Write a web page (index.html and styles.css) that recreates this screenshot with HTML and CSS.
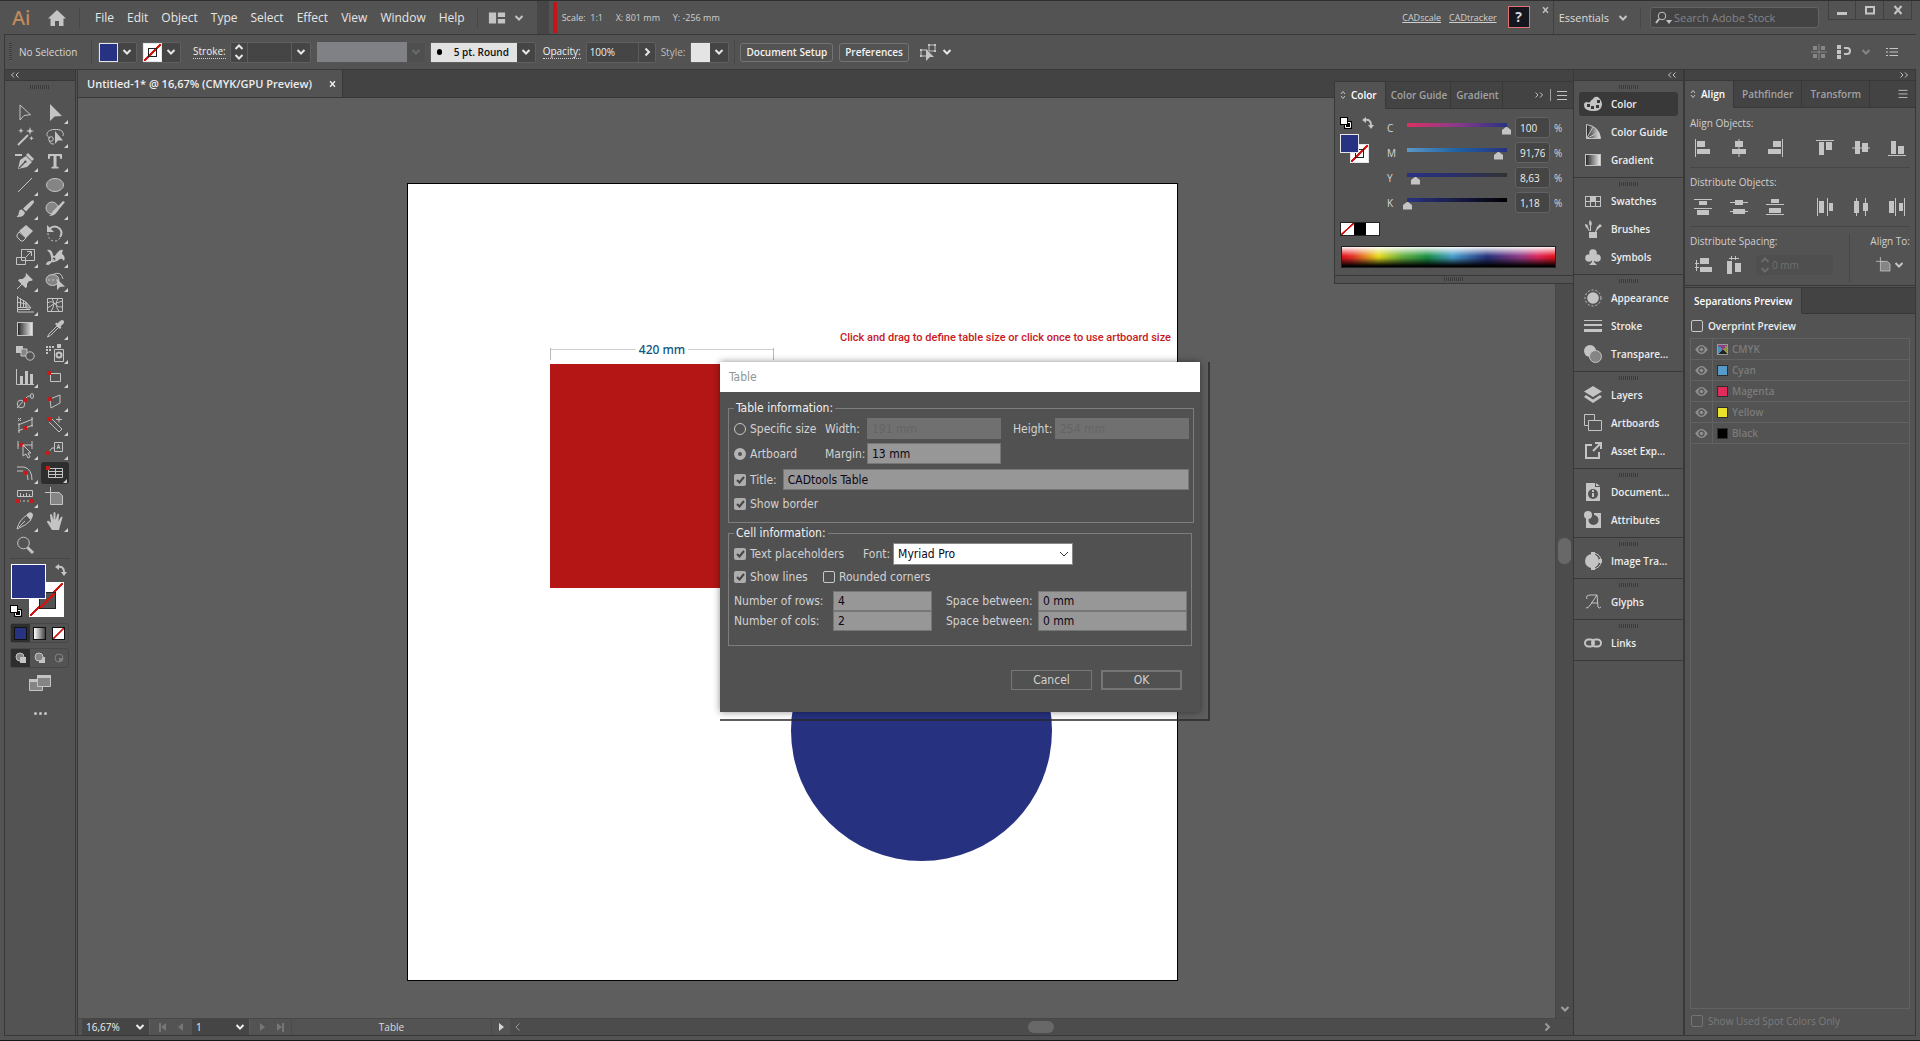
FILE: index.html
```html
<!DOCTYPE html>
<html lang="en">
  <head>
    <meta charset="utf-8">
    <meta name="viewport" content="width=device-width, initial-scale=1">
    <title>Untitled-1* @ 16,67% (CMYK/GPU Preview)</title>
    <link rel="stylesheet" href="styles.css">
  </head>
  <body>

    <!-- icon sprite -->
    <svg class="sprite" aria-hidden="true">
      <defs>
        <linearGradient id="gradGrey"><stop offset="0" stop-color="#222"/><stop offset="1" stop-color="#eee"/></linearGradient>
      </defs>
      <symbol id="i-home" viewBox="0 0 20 20"><path class="f" d="M10 2 1 10.5h2.5V18H8v-5h4v5h4.500v-7.500H19z"/></symbol>
      <symbol id="i-layout" viewBox="0 0 20 16"><path class="f" d="M1 2h8v12H1zM11 2h8v5h-8zM11 9h8v5h-8z"/></symbol>
      <symbol id="i-chev" viewBox="0 0 10 10"><path class="s2" d="M1.500 3 5 6.500 8.500 3"/></symbol>
      <symbol id="i-chevr" viewBox="0 0 10 10"><path class="s2" d="M3.500 1.500 7 5 3.500 8.500"/></symbol>
      <symbol id="i-chevl" viewBox="0 0 10 10"><path class="s" d="M6.500 1.500 3 5l3.500 3.500"/></symbol>
      <symbol id="i-updown" viewBox="0 0 10 18"><path class="s2" d="M1.500 6 5 2.500 8.500 6M1.500 12 5 15.500 8.500 12"/></symbol>
      <symbol id="i-sort" viewBox="0 0 6 10"><path class="s" d="M1 4l2-2.500L5 4M1 6l2 2.500L5 6"/></symbol>
      <symbol id="i-coll" viewBox="0 0 10 8"><path class="s" d="M4 1.500 1.500 4 4 6.500M8.500 1.500 6 4l2.500 2.500"/></symbol>
      <symbol id="i-exp" viewBox="0 0 10 8"><path class="s" d="M1.500 1.500 4 4 1.500 6.500M6 1.500 8.500 4 6 6.500"/></symbol>
      <symbol id="i-menu" viewBox="0 0 10 10"><path class="s" d="M0 1.500h10M0 5.500h10M0 9.500h10"/></symbol>
      <symbol id="i-search" viewBox="0 0 18 14"><circle class="s" cx="7" cy="5" r="3.800"/><path class="s2" d="M4 8 1 12"/><path class="f" d="M11 9h6l-3 4z"/></symbol>
      <symbol id="i-close" viewBox="0 0 10 10"><path class="s2" d="M1.500 1 8.500 9M8.500 1 1.500 9"/></symbol>
      <symbol id="i-min" viewBox="0 0 10 10"><path class="f" d="M0 7h10v3H0z"/></symbol>
      <symbol id="i-max" viewBox="0 0 10 10"><path class="s2" d="M1 2h8v6.500H1z"/></symbol>
      <symbol id="i-isolate" viewBox="0 0 18 18"><path class="s" d="M2 7h6v6H2zM10 2h6v6h-6z"/><path class="f" d="M1 6h2v2H1zM1 12h2v2H1zM9 1h2v2H9zM15 1h2v2h-2zM15 7h2v2h-2zM7 6l8 8h-4l-4 4z"/></symbol>
      <symbol id="i-pixel" viewBox="0 0 16 16"><path class="f" d="M2 2h4v4H2zM10 2h4v4h-4zM2 10h4v4H2zM10 10h4v4h-4z"/><path class="s" d="M8 0v16M0 8h16"/></symbol>
      <symbol id="i-snap" viewBox="0 0 16 16"><path class="f" d="M1 1h4v4H1zM1 6h4v4H1zM1 11h4v4H1z"/><path class="s2" d="M8 4h3a3 3 0 0 1 0 6H8"/></symbol>
      <symbol id="i-list" viewBox="0 0 12 10"><path class="s" d="M0 1.500h2M3.500 1.500H12M0 5h2M3.500 5H12M0 8.500h2M3.500 8.500H12"/></symbol>

      <!-- tools -->
      <symbol id="t-select" viewBox="0 0 20 20"><path class="s" d="M5 2v15l4-4.500 6.500-.8z"/></symbol>
      <symbol id="t-direct" viewBox="0 0 20 20"><path class="f" d="M5 1v17l4.500-4.500L17 13z"/></symbol>
      <symbol id="t-wand" viewBox="0 0 20 20"><path class="s2" d="M3 18 13 8"/><path class="f" d="M15 0l1 3 3 1-3 1-1 3-1-3-3-1 3-1zM6 1l.7 2 2 .7-2 .8L6 6.500l-.8-2-2-.8 2-.7zM16.500 9l.6 1.600 1.600.6-1.600.7-.6 1.600-.7-1.600-1.600-.7 1.600-.6z"/></symbol>
      <symbol id="t-lasso" viewBox="0 0 20 20"><path class="s" d="M5 11C0 9 1 3 9 2.500S19 5 18 9"/><circle class="s" cx="6" cy="12" r="2.300"/><path class="s" d="M4 14q2 4 5 3"/><path class="f" d="M10 4v13l3-3.500h5z"/></symbol>
      <symbol id="t-pen" viewBox="0 0 20 20"><path class="s2" d="M0 4h7"/><path class="f" fill-rule="evenodd" d="M3 18l2-9 6-4 6 6-5 5zM4.500 17.500 10 12a1.300 1.300 0 1 0-1-1L3.800 16.500z"/><path class="f" d="M13 2l6 6-2 2-6-6z"/></symbol>
      <symbol id="t-type" viewBox="0 0 20 20"><path class="f" d="M3 3h14v5h-1.500L14.500 5h-3v10.500l2 .5v1.500h-7V16l2-.5V5h-3l-1 3H3z"/></symbol>
      <symbol id="t-line" viewBox="0 0 20 20"><path class="s" d="M3 17 17 3"/></symbol>
      <symbol id="t-ellipse" viewBox="0 0 20 20"><ellipse class="sf" cx="10" cy="10" rx="8.500" ry="6.500"/></symbol>
      <symbol id="t-brush" viewBox="0 0 20 20"><path class="f" d="M18.500 1.500Q20 3 17 6l-6 6.500-3-3L15 3q2.500-2.500 3.500-1.500zM7 10.500l3 3q-1 5-8.500 4.500Q4 16 4 13t3-2.500z"/></symbol>
      <symbol id="t-blob" viewBox="0 0 20 20"><circle class="sf" cx="7" cy="9" r="6"/><path class="f" d="M20 3 11 14q-2 3-7 3 3-2 4-5L18 2z"/></symbol>
      <symbol id="t-eraser" viewBox="0 0 20 20"><path class="f" d="M11 2l7 6-7 7-7-7z"/><path class="s" d="M4 9l7 6-3 3H6l-4-4v-2z"/></symbol>
      <symbol id="t-rotate" viewBox="0 0 20 20"><path class="s2" d="M4 6q6-5 11 0 3 4 0 8"/><path class="f" d="M2 2v7h7z"/><path class="s dash" d="M3 10q0 8 7 8 3 0 5-3"/></symbol>
      <symbol id="t-scale" viewBox="0 0 20 20"><path class="s" d="M1.500 10.500h9v7h-9zM6.500 2.500h13v11h-13zM11 10l5-5M12 4.500h4.500V9"/></symbol>
      <symbol id="t-width" viewBox="0 0 20 20"><path class="f" d="M2 3q5-1 6 5 1 3 4-2 3-4 6-3-1 2-1 4 4 2 2 7-2-3-4-2-4 4-8 3-2 3-6 3 0-4 5-4Q7 7 2 3z"/><circle class="h" cx="9" cy="12" r="2"/><path class="s" d="M3 18 9 12"/></symbol>
      <symbol id="t-pin" viewBox="0 0 20 20"><path class="f" d="M11 2l7 7-2 1-2 0-2 3 0 3-1.500 1L3 9.500 4.500 8h3l3-2.500z"/><path class="s" d="M8 12 2 18"/></symbol>
      <symbol id="t-shape" viewBox="0 0 20 20"><ellipse class="sf" cx="7.500" cy="9" rx="6.500" ry="5.500"/><path class="s" d="M7 4q9-5 11 4"/><path class="s dash" d="M3 9h9"/><path class="f" d="M12 8v11l3-3 5-.5z"/></symbol>
      <symbol id="t-persp" viewBox="0 0 20 20"><path class="s" d="M2.500 1v16H19M2 2l9 5v6M2 7l9 2M2 12.500h9M5.500 3.500V12M8.500 5v8M3 14.500h12"/><path class="sf" d="M11 7l5 6h-5z"/></symbol>
      <symbol id="t-mesh" viewBox="0 0 20 20"><path class="s" d="M2.500 3.500h15v13h-15zM2.500 8Q7 5 10 9t7.500 3M2.500 13Q8 8 17.500 6M7 3.500Q11 9 6 16.500M13 3.500q-4 6 1 13"/></symbol>
      <symbol id="t-grad" viewBox="0 0 20 20"><rect class="grad" x="2.500" y="3.500" width="15" height="13"/></symbol>
      <symbol id="t-eye" viewBox="0 0 20 20"><path class="s" d="M12 7 4 15l-1.500 3L5.500 16.500l8-8z"/><path class="f" d="M18.500 1.500q1.500 2-1 4L15.500 7.500l1 1L15 10l-5-5 1.500-1.500 1 1L14.500 2.500q2-2.500 4-1z"/></symbol>
      <symbol id="t-blend" viewBox="0 0 20 20"><path class="f" d="M1 3h7v7H1z"/><path class="sf" d="M6 6h6v7H6z"/><circle class="h" cx="15" cy="13" r="4.200"/></symbol>
      <symbol id="t-spray" viewBox="0 0 20 20"><path class="f" d="M1 3h2v2H1zM4 3h2v2H4zM7 3h2v2H7zM1 6h2v2H1zM4 6h2v2H4zM1 9h2v2H1zM12 1h4v4h-4z"/><path class="s" d="M9.500 6.500h9v12h-9z"/><circle class="s2" cx="14" cy="12" r="2.500"/></symbol>
      <symbol id="t-graph" viewBox="0 0 20 20"><path class="s" d="M1.500 2v15.500H19"/><path class="f" d="M5 9h3v8H5zM10 4h3v13h-3zM15 7h3v10h-3z"/></symbol>
      <symbol id="t-wall" viewBox="0 0 20 20"><path class="s" d="M5.500 6.500h10v8h-10z"/><path class="r" d="M2 4h4v4H2z"/></symbol>
      <symbol id="t-hole" viewBox="0 0 20 20"><circle class="s" cx="6" cy="13" r="3.800"/><path class="s" d="M2 17 10 8q3-4 5-3"/><ellipse class="s" cx="17" cy="5" rx="1.500" ry="2.500"/><path class="r" d="M8 7h4v4H8z"/></symbol>
      <symbol id="t-iso" viewBox="0 0 20 20"><path class="s" d="M5 8l10-4v8L6 17z"/><path class="r" d="M3 6h4v4H3z"/></symbol>
      <symbol id="t-dim" viewBox="0 0 20 20"><path class="s" d="M3 10l15-6M3 16l15-6M4 8v10M17 2v10M3 3l3 3M6 3 3 6"/><path class="r" d="M8 11h4v4H8z"/></symbol>
      <symbol id="t-dimadd" viewBox="0 0 20 20"><path class="s" d="M4 7l10 10M7 4l10 10M14 17l3-3M11 4.500h6M14 1.500v6"/><path class="r" d="M2 2h4v4H2z"/></symbol>
      <symbol id="t-dimsel" viewBox="0 0 20 20"><path class="s" d="M3 2v8M17 2v8M3 6h14"/><path class="r" d="M4 4h4v4H4z"/><path class="h" d="M8 6v11l3-2 2 4 2-1-2-4h3z"/></symbol>
      <symbol id="t-label" viewBox="0 0 20 20"><path class="s" d="M9.500 3.500h8v9h-8zM3 14l4-5h2.500M12 10l1.500-4.500L15 10M12.500 8.500h2"/><path class="r" d="M1 12h4v4H1z"/></symbol>
      <symbol id="t-arc" viewBox="0 0 20 20"><path class="s" d="M2 4h7q8 2 8 13M2 8h6q5 2 5 9"/><path class="r" d="M8 8h4v4H8z"/></symbol>
      <symbol id="t-table" viewBox="0 0 20 20"><path class="s" d="M3.500 5.500h14v9h-14zM3.500 8.500h14M3.500 11.500h14M10.500 5.500v9"/><path class="r" d="M1 3h4v4H1z"/></symbol>
      <symbol id="t-ruler" viewBox="0 0 20 20"><path class="s" d="M2.500 3.500h15v6h-15zM5.500 6v3M8.500 7v2M11.500 6v3M14.500 7v2"/><path class="s dash" d="M4 14h12"/><path class="r" d="M1 12h4v4H1zM15 12h4v4h-4z"/></symbol>
      <symbol id="t-artb" viewBox="0 0 20 20"><path class="sf" d="M5.500 5.500H14l3.500 3v9h-12z"/><path class="s" d="M5.500 0v5.500H0M5.500 5.500H9"/></symbol>
      <symbol id="t-knife" viewBox="0 0 20 20"><path class="s" d="M2 18Q4 9 12 4l4 5q-4 5-14 9zM4 16l6-6"/><path class="f" d="M12 3q3-3 5-1t0 5l-1 2-4-4z"/></symbol>
      <symbol id="t-hand" viewBox="0 0 20 20"><path class="f" d="M7 19 2 11q0-2 2-1l2 2L5 4q1-2 2 0l1.500 5V2q1-2 2 0v7L12.500 3q1-1 1.500.5L13.500 10l2.500-4q1.500-1 1.500.5L15 15l-1 4z"/></symbol>
      <symbol id="t-zoom" viewBox="0 0 20 20"><circle class="s" cx="8.500" cy="8" r="5.800"/><path class="s3" d="M12.500 12.500 18 18"/></symbol>
      <symbol id="i-swap" viewBox="0 0 12 12"><path class="s2" d="M3 3q6-1 6 5"/><path class="f" d="M4 0v6L0 3zM6 8h6l-3 4z"/></symbol>
      <symbol id="i-default" viewBox="0 0 12 12"><path class="blk" d="M4 4h8v8H4z"/><path class="wln" d="M5.500 5.500h5v5h-5z"/><path class="blk" d="M0 0h8v8H0z"/><path class="wht" d="M1 1h6v6H1z"/></symbol>
      <symbol id="i-dm1" viewBox="0 0 12 12"><circle class="sf" cx="5" cy="5" r="4"/><path class="f" d="M5 5h6v6H5z"/></symbol>
      <symbol id="i-dm2" viewBox="0 0 12 12"><path class="f" d="M5 5h6v6H5z"/><circle class="sf" cx="5" cy="5" r="4"/></symbol>
      <symbol id="i-dm3" viewBox="0 0 12 12"><circle class="s" cx="6" cy="6" r="4"/><path class="f" d="M6 6h4v2L8 10H6z"/></symbol>
      <symbol id="i-screen" viewBox="0 0 22 16"><path class="sf" d="M.5 4.500h13v11H.5z"/><path class="f" d="M0 4h14v3H0z"/><path class="sf" d="M8.500.5h13v11h-13z"/><path class="f" d="M8 0h14v3H8z"/></symbol>

      <!-- dock -->
      <symbol id="d-color" viewBox="0 0 18 18"><path class="f" fill-rule="evenodd" d="M9 4q1-3 5-2 4 3 4 8-1 6-8 6-10 0-10-6 0-3 3-3 2 1 3 0 2-3 3-3zM3 9v3h3V9zM7 11v3h3v-3zM12 10v3h3v-3zM13 5v3h3V5z"/></symbol>
      <symbol id="d-guide" viewBox="0 0 18 18"><path class="grad" d="M2.500 1.500q13 2 14 14h-14z"/><path class="s" d="M2.500 15.500 9 4M2.500 15.500l12-6"/></symbol>
      <symbol id="d-grad" viewBox="0 0 18 18"><rect class="grad" x="1.500" y="3.500" width="15" height="11"/></symbol>
      <symbol id="d-swatch" viewBox="0 0 18 18"><path class="f" d="M1 4h16v11H1z"/><path class="hole" d="M2 5h4v4H2zM12 5h4v4h-4zM2 10h4v4H2zM7 10h4v4H7zM12 10h4v4h-4z"/></symbol>
      <symbol id="d-brush" viewBox="0 0 18 18"><path class="f" d="M5 12h8v6H5zM6 0q3 3 1 6v5H6V6Q4 3 6 0zM1 4q3 0 3 3l2 4H5L3 8Q1 7 1 4zM16 4l2 2-4 3-2 3h-1l2-5z"/></symbol>
      <symbol id="d-sym" viewBox="0 0 18 18"><circle class="f" cx="9" cy="5" r="3.800"/><circle class="f" cx="5" cy="10" r="3.800"/><circle class="f" cx="13" cy="10" r="3.800"/><path class="f" d="M8 8h2v6l3 3H5l3-3z"/></symbol>
      <symbol id="d-appear" viewBox="0 0 18 18"><circle class="f" cx="9" cy="9" r="5.800"/><circle class="s dash" cx="9" cy="9" r="8"/></symbol>
      <symbol id="d-stroke" viewBox="0 0 18 18"><path class="f" d="M0 3h18v1H0zM0 7h18v2H0zM0 12h18v3H0z"/></symbol>
      <symbol id="d-trans" viewBox="0 0 18 18"><circle class="f" cx="6" cy="6" r="6"/><circle class="sf" cx="11.500" cy="11.500" r="6"/></symbol>
      <symbol id="d-layers" viewBox="0 0 18 18"><path class="f" d="M9 0l9 5.500L9 11 0 5.500zM2 9l7 4.500L16 9l2 2-9 6-9-6z"/></symbol>
      <symbol id="d-artb" viewBox="0 0 18 18"><path class="s" d="M4 11.500H.5V.5h10V6M4.500 6.500h13v10h-13z"/></symbol>
      <symbol id="d-asset" viewBox="0 0 18 18"><path class="s2" d="M8 3H2v13h13v-6M9 9l7-7M11 1h6v6"/></symbol>
      <symbol id="d-doc" viewBox="0 0 18 18"><path class="f" d="M2 0h9v4h5v14H2zM12 0l4 3h-4z"/><circle class="hole" cx="9" cy="11" r="5"/><path class="f" d="M8 7h2v2H8zM8 10h2v4H8z"/></symbol>
      <symbol id="d-attr" viewBox="0 0 18 18"><path class="f" d="M2 7h15v10H2zM10 2h7v6h-7z"/><circle class="hole" cx="9.500" cy="9" r="5"/><circle class="f" cx="4" cy="4" r="4"/></symbol>
      <symbol id="d-trace" viewBox="0 0 18 18"><circle class="f" cx="8" cy="9" r="7"/><path class="s" d="M9 1q8 1 8 8t-8 8"/><path class="f" d="M7 0h4v3H7zM7 15h4v3H7zM15 7h3v4h-3z"/></symbol>
      <symbol id="d-glyph" viewBox="0 0 18 18"><path class="s" d="M2 15q2 1 5-4l6-9 1 12q1 2 3 0M7 10h7M3 6q-2-4 4-4h6"/></symbol>
      <symbol id="d-link" viewBox="0 0 18 18"><rect class="s2" x="1" y="5.500" width="9" height="7" rx="3.500"/><rect class="s2" x="8" y="5.500" width="9" height="7" rx="3.500"/></symbol>

      <!-- align -->
      <symbol id="a-l" viewBox="0 0 18 18"><path class="f" d="M1 0h1v18H1zM3 2h8v6H3zM3 10h13v5H3z"/></symbol>
      <symbol id="a-c" viewBox="0 0 18 18"><path class="f" d="M8.500 0h1v18h-1zM5 2h8v6H5zM2 10h14v5H2z"/></symbol>
      <symbol id="a-r" viewBox="0 0 18 18"><path class="f" d="M16 0h1v18h-1zM7 2h8v6H7zM2 10h13v5H2z"/></symbol>
      <symbol id="a-t" viewBox="0 0 18 18"><path class="f" d="M0 1h18v1H0zM3 3h5v13H3zM10 3h6v8h-6z"/></symbol>
      <symbol id="a-m" viewBox="0 0 18 18"><path class="f" d="M0 8.500h18v1H0zM3 2h5v13H3zM10 4h6v9h-6z"/></symbol>
      <symbol id="a-b" viewBox="0 0 18 18"><path class="f" d="M0 16h18v1H0zM3 2h5v13H3zM10 7h6v8h-6z"/></symbol>
      <symbol id="a-dt" viewBox="0 0 18 18"><path class="f" d="M0 1h18v1H0zM5 3h8v4H5zM0 10h18v1H0zM3 12h12v5H3z"/></symbol>
      <symbol id="a-dm" viewBox="0 0 18 18"><path class="f" d="M0 4h18v1H0zM5 2h8v5H5zM0 13h18v1H0zM3 11h12v5H3z"/></symbol>
      <symbol id="a-db" viewBox="0 0 18 18"><path class="f" d="M0 6h18v1H0zM5 1h8v4H5zM0 16h18v1H0zM3 10h12v5H3z"/></symbol>
      <symbol id="a-dl" viewBox="0 0 18 18"><path class="f" d="M1 0h1v18H1zM3 3h5v12H3zM11 0h1v18h-1zM13 5h4v8h-4z"/></symbol>
      <symbol id="a-dc" viewBox="0 0 18 18"><path class="f" d="M4 0h1v18H4zM2 3h5v12H2zM13 0h1v18h-1zM11 5h5v8h-5z"/></symbol>
      <symbol id="a-dr" viewBox="0 0 18 18"><path class="f" d="M7 0h1v18H7zM1 3h5v12H1zM16 0h1v18h-1zM11 5h4v8h-4z"/></symbol>
      <symbol id="a-sv" viewBox="0 0 18 18"><path class="f" d="M6 2h9v6H6zM6 11h12v5H6z"/><path class="s" d="M1 7.500h4M1 11.500h4M2.500 4v11"/></symbol>
      <symbol id="a-sh" viewBox="0 0 18 18"><path class="f" d="M2 5h5v13H2zM10 7h6v9h-6z"/><path class="s" d="M6.500 0v4M10.500 0v4M4 2.500h10"/></symbol>
      <symbol id="i-eyeb" viewBox="0 0 14 10"><path class="f" fill-rule="evenodd" d="M0 5q7-10 14 0-7 10-14 0zM7 1.500a3.500 3.500 0 1 0 .01 0z"/><circle class="f" cx="7" cy="5" r="2"/></symbol>
    </svg>

    <header class="topbar">
      <span class="logo">Ai</span>
      <svg class="ic20 home"><use href="#i-home"/></svg>
      <nav class="menu">
        <a href="#">File</a><a href="#">Edit</a><a href="#">Object</a><a href="#">Type</a><a href="#">Select</a><a href="#">Effect</a><a href="#">View</a><a href="#">Window</a><a href="#">Help</a>
      </nav>
      <button class="flat arrange" aria-label="Arrange documents"><svg class="ic18"><use href="#i-layout"/></svg><svg class="ic10"><use href="#i-chev"/></svg></button>
      <div class="cadbar">
        <span class="redbar"></span>
        <span class="cad-scale">Scale:&nbsp; 1:1</span>
        <span class="cad-x">X: 801 mm</span>
        <span class="cad-y">Y: -256 mm</span>
        <a class="push" href="#">CADscale</a>
        <a href="#">CADtracker</a>
        <button class="help">?</button>
        <button class="flat cad-close" aria-label="Close"><svg class="ic6"><use href="#i-close"/></svg></button>
      </div>
      <button class="flat essentials">Essentials <svg class="ic10"><use href="#i-chev"/></svg></button>
      <label class="search"><svg class="ic18"><use href="#i-search"/></svg><input type="text" placeholder="Search Adobe Stock" aria-label="Search Adobe Stock"></label>
      <div class="winbtns">
        <button aria-label="Minimize"><svg class="ic10"><use href="#i-min"/></svg></button>
        <button aria-label="Maximize"><svg class="ic10"><use href="#i-max"/></svg></button>
        <button aria-label="Close"><svg class="ic10"><use href="#i-close"/></svg></button>
      </div>
    </header>

    <div class="frame">
      <div class="control">
        <span class="grip-v"></span>
        <span class="nosel">No Selection</span>
        <button class="combo sw" aria-label="Fill"><span class="chip fill"></span><svg class="ic10"><use href="#i-chev"/></svg></button>
        <button class="combo sw" aria-label="Stroke"><span class="chip none sq"></span><svg class="ic10"><use href="#i-chev"/></svg></button>
        <label class="dotted stroke-l" for="strokew">Stroke:</label>
        <div class="combo weight"><svg class="step"><use href="#i-updown"/></svg><input id="strokew" type="text"><button class="dd" aria-label="Weights"><svg class="ic10"><use href="#i-chev"/></svg></button></div>
        <button class="combo profile" disabled aria-label="Width profile"><span class="greybox"></span><svg class="ic10"><use href="#i-chev"/></svg></button>
        <button class="combo round"><span class="brushname"><i></i>5 pt. Round</span><svg class="ic10"><use href="#i-chev"/></svg></button>
        <label class="dotted" for="opac">Opacity:</label>
        <div class="combo opac"><input id="opac" type="text" value="100%"><button class="dd" aria-label="Opacity"><svg class="ic10"><use href="#i-chevr"/></svg></button></div>
        <span class="dim-l">Style:</span>
        <button class="combo sw" aria-label="Graphic style"><span class="chip pale"></span><svg class="ic10"><use href="#i-chev"/></svg></button>
        <span class="vsep"></span>
        <button class="btn">Document Setup</button>
        <button class="btn">Preferences</button>
        <button class="flat iso" aria-label="Isolate"><svg class="ic18"><use href="#i-isolate"/></svg><svg class="ic10"><use href="#i-chev"/></svg></button>
        <div class="ctl-right">
          <svg class="ic16 dim"><use href="#i-pixel"/></svg>
          <svg class="ic16"><use href="#i-snap"/></svg>
          <svg class="ic10 dim"><use href="#i-chev"/></svg>
          <svg class="ic12 last"><use href="#i-list"/></svg>
        </div>
      </div>

      <div class="main">
        <aside class="toolbar">
          <div class="strip"><svg class="coll"><use href="#i-coll"/></svg></div>
          <div class="grip"></div>
          <div class="tools">
            <button aria-label="Selection"><svg><use href="#t-select"/></svg></button>
            <button class="more" aria-label="Direct selection"><svg><use href="#t-direct"/></svg></button>
            <button aria-label="Magic wand"><svg><use href="#t-wand"/></svg></button>
            <button class="more" aria-label="Lasso"><svg><use href="#t-lasso"/></svg></button>
            <button class="more" aria-label="Pen"><svg><use href="#t-pen"/></svg></button>
            <button class="more" aria-label="Type"><svg><use href="#t-type"/></svg></button>
            <button class="more" aria-label="Line"><svg><use href="#t-line"/></svg></button>
            <button class="more" aria-label="Ellipse"><svg><use href="#t-ellipse"/></svg></button>
            <button class="more" aria-label="Paintbrush"><svg><use href="#t-brush"/></svg></button>
            <button class="more" aria-label="Blob brush"><svg><use href="#t-blob"/></svg></button>
            <button class="more" aria-label="Eraser"><svg><use href="#t-eraser"/></svg></button>
            <button class="more" aria-label="Rotate"><svg><use href="#t-rotate"/></svg></button>
            <button class="more" aria-label="Scale"><svg><use href="#t-scale"/></svg></button>
            <button class="more" aria-label="Width"><svg><use href="#t-width"/></svg></button>
            <button class="more" aria-label="Puppet warp"><svg><use href="#t-pin"/></svg></button>
            <button class="more" aria-label="Shape builder"><svg><use href="#t-shape"/></svg></button>
            <button class="more" aria-label="Perspective grid"><svg><use href="#t-persp"/></svg></button>
            <button aria-label="Mesh"><svg><use href="#t-mesh"/></svg></button>
            <button aria-label="Gradient"><svg><use href="#t-grad"/></svg></button>
            <button class="more" aria-label="Eyedropper"><svg><use href="#t-eye"/></svg></button>
            <button aria-label="Blend"><svg><use href="#t-blend"/></svg></button>
            <button class="more" aria-label="Symbol sprayer"><svg><use href="#t-spray"/></svg></button>
            <button class="more" aria-label="Graph"><svg><use href="#t-graph"/></svg></button>
            <button class="more" aria-label="Scaled shape"><svg><use href="#t-wall"/></svg></button>
            <button class="more" aria-label="Scaled hole"><svg><use href="#t-hole"/></svg></button>
            <button class="more" aria-label="Isometric"><svg><use href="#t-iso"/></svg></button>
            <button class="more" aria-label="Dimension"><svg><use href="#t-dim"/></svg></button>
            <button class="more" aria-label="Add dimension"><svg><use href="#t-dimadd"/></svg></button>
            <button class="more" aria-label="Select dimension"><svg><use href="#t-dimsel"/></svg></button>
            <button class="more" aria-label="Label"><svg><use href="#t-label"/></svg></button>
            <button class="more" aria-label="Wall"><svg><use href="#t-arc"/></svg></button>
            <button class="more on" aria-label="Table"><svg><use href="#t-table"/></svg></button>
            <button class="more" aria-label="Measure"><svg><use href="#t-ruler"/></svg></button>
            <button aria-label="Artboard"><svg><use href="#t-artb"/></svg></button>
            <button class="more" aria-label="Slice"><svg><use href="#t-knife"/></svg></button>
            <button class="more" aria-label="Hand"><svg><use href="#t-hand"/></svg></button>
            <button aria-label="Zoom"><svg><use href="#t-zoom"/></svg></button>
          </div>
          <div class="fillstroke">
            <span class="chip none big-stroke"></span>
            <span class="chip fill big-fill"></span>
            <svg class="ic12 swap"><use href="#i-swap"/></svg>
            <svg class="ic12 deft"><use href="#i-default"/></svg>
          </div>
          <div class="seg">
            <button class="on" aria-label="Color"><span class="mini fill"></span></button>
            <button aria-label="Gradient"><span class="mini greyg"></span></button>
            <button aria-label="None"><span class="mini none"></span></button>
          </div>
          <div class="seg">
            <button class="on" aria-label="Draw normal"><svg class="ic12"><use href="#i-dm1"/></svg></button>
            <button aria-label="Draw behind"><svg class="ic12"><use href="#i-dm2"/></svg></button>
            <button class="off" aria-label="Draw inside"><svg class="ic12"><use href="#i-dm3"/></svg></button>
          </div>
          <button class="flat screen" aria-label="Screen mode"><svg><use href="#i-screen"/></svg></button>
          <button class="flat dots" aria-label="Edit toolbar"><i></i><i></i><i></i></button>
        </aside>

        <section class="doc">
          <div class="doctabs">
            <div class="doctab">Untitled-1* @ 16,67% (CMYK/GPU Preview)<button class="flat" aria-label="Close"><svg class="ic6"><use href="#i-close"/></svg></button></div>
          </div>
          <div class="canvas">
            <div class="artboard">
              <div class="square"></div>
              <div class="circle"></div>
              <div class="dimline"><span>420 mm</span></div>
              <p class="hint">Click and drag to define table size or click once to use artboard size</p>
            </div>
            <div class="vscroll"><span></span><svg class="ic10"><use href="#i-chev"/></svg></div>
          </div>
          <footer class="status">
            <select class="zoomsel" aria-label="Zoom"><option>16,67%</option></select>
            <span class="nav"><b class="bar"></b><b class="lt"></b></span>
            <span class="nav"><b class="lt"></b></span>
            <select class="pagesel" aria-label="Artboard"><option>1</option></select>
            <span class="nav"><b class="gt"></b></span>
            <span class="nav"><b class="gt"></b><b class="bar"></b></span>
            <span class="toolname">Table</span>
            <button class="flat play" aria-label="Show"><b class="gt"></b></button>
            <div class="hscroll"><svg class="ic10"><use href="#i-chevl"/></svg><span></span><svg class="ic10"><use href="#i-chevr"/></svg></div>
          </footer>
        </section>

        <aside class="dock">
          <div class="strip right"><svg class="coll"><use href="#i-coll"/></svg></div>
          <div class="group"><div class="grip"></div>
            <button class="on"><svg><use href="#d-color"/></svg>Color</button>
            <button><svg><use href="#d-guide"/></svg>Color Guide</button>
            <button><svg><use href="#d-grad"/></svg>Gradient</button></div>
          <div class="group"><div class="grip"></div>
            <button><svg><use href="#d-swatch"/></svg>Swatches</button>
            <button><svg><use href="#d-brush"/></svg>Brushes</button>
            <button><svg><use href="#d-sym"/></svg>Symbols</button></div>
          <div class="group"><div class="grip"></div>
            <button><svg><use href="#d-appear"/></svg>Appearance</button>
            <button><svg><use href="#d-stroke"/></svg>Stroke</button>
            <button><svg><use href="#d-trans"/></svg>Transpare...</button></div>
          <div class="group"><div class="grip"></div>
            <button><svg><use href="#d-layers"/></svg>Layers</button>
            <button><svg><use href="#d-artb"/></svg>Artboards</button>
            <button><svg><use href="#d-asset"/></svg>Asset Exp...</button></div>
          <div class="group"><div class="grip"></div>
            <button><svg><use href="#d-doc"/></svg>Document...</button>
            <button><svg><use href="#d-attr"/></svg>Attributes</button></div>
          <div class="group"><div class="grip"></div>
            <button><svg><use href="#d-trace"/></svg>Image Tra...</button></div>
          <div class="group"><div class="grip"></div>
            <button><svg><use href="#d-glyph"/></svg>Glyphs</button></div>
          <div class="group"><div class="grip"></div>
            <button><svg><use href="#d-link"/></svg>Links</button></div>
        </aside>

        <aside class="panels">
          <div class="strip right"><svg class="coll"><use href="#i-exp"/></svg></div>
          <div class="panel align">
            <div class="tabs">
              <button class="on"><svg class="sort"><use href="#i-sort"/></svg>Align</button>
              <button>Pathfinder</button>
              <button>Transform</button>
              <svg class="ic10 pmenu"><use href="#i-menu"/></svg>
            </div>
            <div class="abody">
              <h3>Align Objects:</h3>
              <div class="aicons">
                <svg><use href="#a-l"/></svg><svg><use href="#a-c"/></svg><svg><use href="#a-r"/></svg><svg class="far"><use href="#a-t"/></svg><svg><use href="#a-m"/></svg><svg><use href="#a-b"/></svg>
              </div>
              <h3>Distribute Objects:</h3>
              <div class="aicons">
                <svg><use href="#a-dt"/></svg><svg><use href="#a-dm"/></svg><svg><use href="#a-db"/></svg><svg class="far"><use href="#a-dl"/></svg><svg><use href="#a-dc"/></svg><svg><use href="#a-dr"/></svg>
              </div>
              <div class="aspace">
                <div>
                  <h3>Distribute Spacing:</h3>
                  <div class="srow">
                    <svg class="ic18"><use href="#a-sv"/></svg><svg class="ic18"><use href="#a-sh"/></svg>
                    <div class="sfield"><svg class="step"><use href="#i-updown"/></svg><input type="text" value="0 mm" disabled aria-label="Spacing"></div>
                  </div>
                </div>
                <div class="alignto">
                  <h3>Align To:</h3>
                  <button class="flat" aria-label="Align to artboard"><svg class="ic16"><use href="#t-artb"/></svg><svg class="ic10"><use href="#i-chev"/></svg></button>
                </div>
              </div>
            </div>
          </div>
          <div class="panel seps">
            <div class="tabs"><button class="on">Separations Preview</button></div>
            <label class="check"><input type="checkbox">Overprint Preview</label>
            <table class="inks">
              <tr><td><svg><use href="#i-eyeb"/></svg></td><td><span class="ink cmyk"></span>CMYK</td></tr>
              <tr><td><svg><use href="#i-eyeb"/></svg></td><td><span class="ink cyan"></span>Cyan</td></tr>
              <tr><td><svg><use href="#i-eyeb"/></svg></td><td><span class="ink magenta"></span>Magenta</td></tr>
              <tr><td><svg><use href="#i-eyeb"/></svg></td><td><span class="ink yellow"></span>Yellow</td></tr>
              <tr><td><svg><use href="#i-eyeb"/></svg></td><td><span class="ink black"></span>Black</td></tr>
            </table>
            <div class="inkrest"></div>
            <label class="check spot"><input type="checkbox" disabled>Show Used Spot Colors Only</label>
          </div>
        </aside>

        <!-- floating colour panel -->
        <div class="colorpanel">
          <div class="tabs">
            <button class="on"><svg class="sort"><use href="#i-sort"/></svg>Color</button>
            <button class="tight">Color Guide</button>
            <button class="tight">Gradient</button>
            <span class="tabend"><svg class="coll"><use href="#i-exp"/></svg><i></i><svg class="ic10"><use href="#i-menu"/></svg></span>
          </div>
          <div class="cbody">
            <div class="cswatch">
              <div class="ctop"><svg class="ic12"><use href="#i-default"/></svg><svg class="ic12"><use href="#i-swap"/></svg></div>
              <div class="cfs"><span class="chip none sq s-stroke"></span><span class="chip fill s-fill"></span></div>
            </div>
            <div class="sliders">
              <label for="vc">C</label><input class="rg c" type="range" value="100" aria-label="Cyan"><input class="num" id="vc" type="text" value="100"><span>%</span>
              <label for="vm">M</label><input class="rg m" type="range" value="92" aria-label="Magenta"><input class="num" id="vm" type="text" value="91,76"><span>%</span>
              <label for="vy">Y</label><input class="rg y" type="range" value="9" aria-label="Yellow"><input class="num" id="vy" type="text" value="8,63"><span>%</span>
              <label for="vk">K</label><input class="rg k" type="range" value="1" aria-label="Black"><input class="num" id="vk" type="text" value="1,18"><span>%</span>
            </div>
          </div>
          <div class="quick"><span class="none"></span><span class="qb"></span><span class="qw"></span></div>
          <div class="spectrum"></div>
          <div class="resize"><div class="grip"></div></div>
        </div>

        <!-- table dialog -->
        <div class="dlgframe">
          <form class="dialog">
            <div class="dtitle">Table</div>
            <div class="dbody">
              <fieldset>
                <legend>Table information:</legend>
                <div class="drow r24">
                  <label class="opt col1"><input type="radio" name="size">Specific size</label>
                  <label class="lab" for="dw">Width:</label><input class="fld w134" id="dw" type="text" value="191 mm" disabled>
                  <label class="lab2" for="dh">Height:</label><input class="fld w134" id="dh" type="text" value="254 mm" disabled>
                </div>
                <div class="drow r24">
                  <label class="opt col1"><input type="radio" name="size" checked>Artboard</label>
                  <label class="lab" for="dm">Margin:</label><input class="fld w134" id="dm" type="text" value="13 mm">
                </div>
                <div class="drow r28">
                  <label class="opt"><input type="checkbox" checked>Title:</label>
                  <input class="fld grow" type="text" value="CADtools Table" aria-label="Title text">
                </div>
                <div class="drow r20"><label class="opt"><input type="checkbox" checked>Show border</label></div>
              </fieldset>
              <fieldset class="cells">
                <legend>Cell information:</legend>
                <div class="drow r24">
                  <label class="opt col2"><input type="checkbox" checked>Text placeholders</label>
                  <label for="df">Font:</label>
                  <select class="fontsel" id="df"><option>Myriad Pro</option></select>
                </div>
                <div class="drow r20">
                  <label class="opt col3"><input type="checkbox" checked>Show lines</label>
                  <label class="opt"><input type="checkbox">Rounded corners</label>
                </div>
                <div class="dgrid">
                  <label for="nr">Number of rows:</label><input class="fld" id="nr" type="text" value="4">
                  <label for="sr">Space between:</label><input class="fld" id="sr" type="text" value="0 mm">
                  <label for="nc">Number of cols:</label><input class="fld" id="nc" type="text" value="2">
                  <label for="sc">Space between:</label><input class="fld" id="sc" type="text" value="0 mm">
                </div>
              </fieldset>
              <div class="dbtns"><button type="button">Cancel</button><button type="button" class="ok">OK</button></div>
            </div>
          </form>
        </div>
      </div>
    </div>
  </body>
</html>
```

FILE: styles.css
```css
* { box-sizing: border-box; }

body {
  margin: 0;
  height: 100vh;
  display: flex;
  flex-direction: column;
  background: #535353;
  border-bottom: 1px solid #16161c;
  color: #d6d6d6;
  font-family: "Open Sans", "Noto Sans", sans-serif;
  font-size: 10px;
  overflow: hidden;
}

button, input, select { font: inherit; color: inherit; margin: 0; }
button { padding: 0; }
h3, p, fieldset { margin: 0; padding: 0; font-weight: 400; }
a { color: inherit; text-decoration: none; }
svg { display: block; flex: none; color: #c4c4c4; }

/* icon paint */
.sprite { position: absolute; width: 0; height: 0; }
.f { fill: currentColor; }
.s, .s2, .s3, .sf { fill: none; stroke: currentColor; stroke-width: 1; }
.s2 { stroke-width: 2; }
.s3 { stroke-width: 3; }
.sf { fill: #858585; }
.h { fill: #535353; stroke: currentColor; }
.hole { fill: #535353; }
.r { fill: #c8191b; }
.dash { stroke-dasharray: 2 2; }
.grad { fill: url(#gradGrey); stroke: currentColor; }
.blk { fill: #000; }
.wht { fill: #fff; }
.wln { fill: none; stroke: #fff; }
.ic6 { width: 7px; height: 8px; }
.ic10 { width: 10px; height: 10px; }
.ic12 { width: 12px; height: 12px; }
.ic16 { width: 16px; height: 16px; }
.ic18 { width: 18px; height: 18px; }
.ic20 { width: 20px; height: 20px; }
.dim { opacity: .45; }
.coll { width: 10px; height: 8px; }
.sort { width: 6px; height: 10px; }
.step { width: 10px; height: 18px; }

.flat { display: flex; align-items: center; background: none; border: 0; }

/* top bar */
.topbar {
  height: 34px;
  flex: none;
  display: flex;
  align-items: center;
  border-top: 1px solid #2f2f2f;
  font-size: 12px;
}
.logo { width: 35px; margin-left: 12px; font-size: 20px; line-height: 26px; color: #c08a5c; font-family: "Noto Sans", sans-serif; font-weight: 500; }
.home { margin-right: 12px; }
.menu {
  display: flex;
  gap: 13px;
  height: 20px;
  align-items: center;
  padding: 0 12px 0 15px;
  border-left: 1px solid #474747;
  border-right: 1px solid #474747;
  color: #e6e6e6;
}
.arrange { gap: 8px; margin: 0 13px 0 10px; }
.cadbar {
  flex: 1;
  height: 34px;
  display: flex;
  align-items: center;
  border-left: 12px solid #464646;
  border-right: 1px solid #404040;
  border-bottom: 1px solid #404040;
  font-size: 9px;
  color: #cfcfcf;
}
.redbar { width: 4px; height: 31px; margin: 0 5px 0 4px; background: #c41619; }
.cad-scale { width: 54px; }
.cad-x { width: 57px; }
.push { margin-left: auto; }
.cadbar a { margin-right: 8px; text-decoration: underline; }
.help { width: 22px; height: 22px; margin: 0 12px 0 3px; border: 1px solid #e07474; background: #16161e; color: #d8d8d8; font-size: 14px; font-weight: 700; line-height: 18px; }
.cad-close { align-self: flex-start; margin: 5px 4px 0 0; }
.essentials { gap: 9px; padding: 0 12px 0 5px; height: 20px; border-right: 1px solid #474747; color: #dcdcdc; font-size: 11px; }
.search { display: flex; align-items: center; width: 169px; height: 21px; margin: 0 9px 0 9px; padding-left: 4px; border: 1px solid #636363; border-radius: 3px; background: #434343; }
.search input { width: 130px; margin-left: 1px; padding: 0; border: 0; background: none; font-size: 11px; }
.search input::placeholder { color: #83838a; }
.winbtns { display: flex; align-self: flex-start; margin-right: 8px; }
.winbtns button { width: 28px; height: 19px; display: flex; align-items: center; justify-content: center; background: none; border: 1px solid #404040; border-top: 0; border-left-width: 0; }
.winbtns button:first-child { border-left-width: 1px; }

.frame { flex: 1; min-height: 0; display: flex; flex-direction: column; margin: 0 4px 4px; border: 1px solid #383838; border-right-width: 0; }

/* control bar */
.control { height: 35px; flex: none; display: flex; align-items: center; border-bottom: 1px solid #383838; }
.grip-v { width: 3px; height: 18px; margin: 0 7px 0 4px; background: repeating-linear-gradient(#3a3a3a 0 1px, #5a5a5a 1px 2px); }
.nosel { width: 73px; height: 24px; line-height: 24px; border-right: 1px solid #474747; margin-right: 6px; font-size: 10px; }
.combo { display: flex; height: 21px; align-items: center; border: 1px solid #606060; border-radius: 2px; background: #454545; padding: 0; }
.combo > .ic10 { margin: 0 4px 0 4px; color: #e6e6e6; }
.sw { margin-right: 5px; }
.chip { width: 19px; height: 19px; border: 1px solid #e6e6e6; }
.fill { background: #283282; }
.pale { background: #e4e4e4; }
.none { background: linear-gradient(to bottom right, transparent 44%, #d0140f 46% 54%, transparent 56%) #fff; }
.sq { display: grid; place-items: center; }
.sq::after { content: ""; width: 7px; height: 7px; border: 1px solid #222; }
.dotted { font-size: 10px; color: #f0f0f0; border-bottom: 1px dotted #d0d0d0; line-height: 13px; }
.stroke-l { margin: 0 4px 0 7px; }
.combo input { border: 0; background: none; padding: 0 3px; min-width: 0; color: #eee; font-size: 10px; }
.weight .step { margin: 0 3px; color: #e6e6e6; }
.weight input { width: 45px; height: 19px; border-left: 1px solid #5c5c5c; border-right: 1px solid #5c5c5c; }
.dd { display: grid; place-items: center; width: 18px; height: 19px; border: 0; background: none; }
.dd svg { color: #e6e6e6; }
.profile { margin: 0 4px 0 5px; border-color: #555; background: #4f4f4f; }
.profile .ic10 { color: #6b6b6b; }
.greybox { width: 90px; height: 20px; background: #808184; }
.brushname { display: flex; align-items: center; gap: 12px; width: 86px; height: 19px; padding-left: 6px; background: #e2e2e2; color: #111; font-size: 10px; font-weight: 600; }
.brushname i { width: 5px; height: 6px; border-radius: 3px; background: #000; }
.round { margin-right: 7px; }
.opac { margin: 0 5px 0 5px; }
.opac input { width: 51px; }
.opac .dd { border-left: 1px solid #5c5c5c; width: 17px; }
.dim-l { margin-right: 5px; font-size: 10px; color: #bcbcbc; }
.vsep { width: 1px; height: 24px; margin-right: 5px; background: #474747; }
.btn { height: 19px; padding: 0 5px; border: 1px solid #747474; border-radius: 3px; background: none; color: #f2f2f2; font-size: 10px; font-weight: 600; line-height: 16px; margin-right: 6px; }
.iso { gap: 5px; margin-left: 4px; }
.iso .ic10 { color: #e6e6e6; }
.ctl-right { display: flex; align-items: center; margin-left: auto; gap: 9px; }
.last { margin: 0 18px 0 6px; }

.main { position: relative; flex: 1; min-height: 0; display: flex; }
.strip { height: 11px; flex: none; display: flex; align-items: center; padding: 0 5px; background: #434343; border-bottom: 1px solid #383838; }
.strip.right { justify-content: flex-end; padding: 0 6px; }
.grip { width: 20px; height: 4px; margin: 4px auto 0; background: repeating-linear-gradient(90deg, #3a3a3a 0 1px, #555 1px 2px); }

/* tools */
.toolbar { width: 71px; border-right: 1px solid #383838; }
.tools { display: grid; grid-template-columns: 30px 30px; grid-auto-rows: 24px; margin: 12px 5px 0; }
.tools button { position: relative; display: grid; place-items: center; background: none; border: 0; }
.tools svg { width: 20px; height: 20px; }
.tools .more::after { content: ""; position: absolute; right: 2px; bottom: 1px; border: 2px solid transparent; border-right-color: #cfcfcf; border-bottom-color: #cfcfcf; }
.tools .on { background: #2e2e2e; border-radius: 3px; margin: 1px; }
.fillstroke { position: relative; height: 62px; margin: 1px 5px 3px; border-top: 1px solid #474747; }
.big-fill, .big-stroke { position: absolute; width: 35px; height: 35px; border: 1px solid #fff; }
.big-fill { left: 1px; top: 5px; }
.big-stroke { left: 19px; top: 23px; background: linear-gradient(to bottom right, transparent 47%, #d0140f 48% 52%, transparent 53%) #fff; }
.big-stroke::after { content: ""; position: absolute; left: 9px; top: 9px; width: 15px; height: 15px; border: 1px solid #222; background: linear-gradient(to bottom right, transparent 43%, #d0140f 45% 55%, transparent 57%) #535353; }
.swap { position: absolute; right: 3px; top: 5px; }
.deft { position: absolute; left: 0; top: 46px; }
.seg { display: flex; height: 20px; margin: 0 6px 5px 5px; border: 1px solid #474747; border-radius: 3px; }
.seg button { flex: 1; display: grid; place-items: center; background: none; border: 0; }
.seg .on { background: #2e2e2e; }
.seg .off { opacity: .4; }
.mini { width: 13px; height: 13px; border: 1px solid #111; }
.greyg { background: linear-gradient(90deg, #fff, #444); }
.screen { margin: 7px auto 0; }
.screen svg { width: 22px; height: 16px; }
.dots { gap: 2px; margin: 21px auto 0; }
.dots i { width: 3px; height: 3px; border-radius: 2px; background: #c4c4c4; }

/* document */
.doc { flex: 1; min-width: 0; display: flex; flex-direction: column; margin-left: 1px; border-left: 1px solid #383838; }
.doctabs { height: 28px; flex: none; display: flex; background: #434343; border-bottom: 1px solid #383838; }
.doctab { display: flex; align-items: center; gap: 17px; padding: 0 6px 0 9px; background: #535353; border-right: 1px solid #383838; color: #ededed; font-size: 11px; font-weight: 600; }
.doctab svg { color: #f0f0f0; }
.canvas { position: relative; flex: 1; background: #5e5e5e; overflow: hidden; }
.artboard { position: absolute; left: 329px; top: 85px; width: 771px; height: 798px; border: 1px solid #000; background: #fff; }
.square { position: absolute; left: 142px; top: 180px; width: 224px; height: 224px; background: #b41616; }
.circle { position: absolute; left: 383px; top: 416px; width: 261px; height: 261px; border-radius: 50%; background: #263180; }
.dimline { position: absolute; left: 142px; top: 158px; width: 224px; height: 20px; color: #0d5583; font-size: 12px; line-height: 16px; text-align: center; background: linear-gradient(#cfcfcf, #cfcfcf) 0 7px / 100% 1px no-repeat; }
.dimline::before, .dimline::after { content: ""; position: absolute; top: 6px; width: 1px; height: 12px; background: #b8b8b8; }
.dimline::before { left: 0; }
.dimline::after { right: 0; }
.dimline span { padding: 0 3px; background: #fff; font-family: "Noto Sans", sans-serif; font-weight: 500; }
.hint { position: absolute; right: 6px; top: 146px; color: #c8191d; font-size: 11px; font-family: Roboto, "Open Sans", sans-serif; font-weight: 500; line-height: 16px; white-space: nowrap; }
.vscroll { position: absolute; right: 0; top: 0; bottom: 0; width: 18px; background: #4c4c4c; border-left: 1px solid #464646; }
.vscroll span { position: absolute; left: 2px; top: 440px; width: 13px; height: 26px; border-radius: 6px; background: #686868; }
.vscroll svg { position: absolute; left: 4px; bottom: 4px; opacity: .7; }

/* status bar */
.status { height: 17px; flex: none; display: flex; align-items: stretch; background: #535353; border-top: 1px solid #474747; font-size: 10px; }
.status select { appearance: none; border: 0; border-right: 1px solid #5c5c5c; border-radius: 0; color: #eee; padding: 0 0 0 4px; background: url("data:image/svg+xml,%3Csvg xmlns='http://www.w3.org/2000/svg' width='10' height='10'%3E%3Cpath d='M1.5 3 5 6.500 8.500 3' fill='none' stroke='%23eee' stroke-width='2'/%3E%3C/svg%3E") right 4px center no-repeat, linear-gradient(90deg, #454545, #454545); }
.zoomsel { width: 68px; margin: 0 4px; }
.pagesel { width: 58px; margin: 0 4px 0 2px; }
.nav { display: flex; align-items: center; justify-content: center; width: 17px; margin-right: 1px; color: #767676; }
.gt, .lt { width: 0; height: 0; border: 4px solid transparent; }
.gt { border-left: 5px solid; border-right: 0; }
.lt { border-right: 5px solid; border-left: 0; }
.bar { width: 2px; height: 9px; background: currentColor; }
.toolname { width: 201px; margin-left: 1px; text-align: center; border: 1px solid #4b4b4b; border-width: 0 1px; color: #dadada; line-height: 17px; }
.play { width: 18px; justify-content: center; color: #d6d6d6; }
.hscroll { position: relative; flex: 1; display: flex; align-items: center; justify-content: space-between; padding: 0 21px 0 3px; background: #4c4c4c; }
.hscroll svg { color: #999; }
.hscroll span { position: absolute; left: 49%; width: 26px; height: 12px; margin-left: -3px; border-radius: 6px; background: #686868; }

/* icon dock */
.dock { width: 111px; flex: none; border: 1px solid #383838; border-width: 0 1px; }
.dock .group { padding-bottom: 1px; border-bottom: 1px solid #383838; overflow: hidden; }
.dock .grip { margin-bottom: 3px; }
.dock button { display: flex; align-items: center; gap: 9px; width: calc(100% - 10px); height: 24px; margin: 2px 5px 4px; padding: 0 0 0 5px; border: 0; border-radius: 3px; background: none; color: #ededed; font-size: 10px; font-weight: 600; }
.dock button + button { margin-top: 0; }
.dock .on { background: #393939; }
.dock button svg { width: 18px; height: 18px; }

/* panels */
.panels { width: 232px; flex: none; display: flex; flex-direction: column; border-left: 1px solid #383838; border-right: 1px solid #383838; }
.tabs { display: flex; height: 27px; flex: none; background: #434343; }
.tabs button { display: flex; align-items: center; gap: 5px; padding: 0 8px; border: 1px solid #383838; border-width: 0 1px 1px 0; background: none; color: #a2a2a2; font-size: 10px; font-weight: 600; white-space: nowrap; }
.tabs .on { padding: 0 8px 0 5px; background: #535353; border-bottom-color: #535353; color: #fff; }
.tabs .tight { padding: 0 3px 0 5px; }
.tabs::after { content: ""; order: 1; flex: 1; border-bottom: 1px solid #383838; }
.pmenu { order: 2; align-self: stretch; width: 17px; height: 27px; padding: 8px 7px 9px 0; border-bottom: 1px solid #383838; }
.align { border-bottom: 3px double #383838; }
.abody { padding: 8px 5px 3px; }
.abody h3 { line-height: 14px; font-size: 10px; color: #d0d0d0; }
.aicons { display: flex; gap: 18px; padding: 9px 4px 10px 4px; border-bottom: 1px solid #474747; margin-bottom: 7px; }
.aicons svg { width: 18px; height: 18px; }
.aicons .far { margin-left: auto; }
.aspace { display: flex; justify-content: space-between; }
.srow { display: flex; align-items: center; gap: 13px; height: 34px; padding-left: 4px; }
.sfield { display: flex; align-items: center; width: 77px; height: 20px; padding-left: 4px; background: #4f4f4f; border-radius: 2px; }
.sfield input { width: 45px; border: 0; background: none; color: #6f6f6f; font-size: 10px; }
.sfield svg { color: #6b6b6b; }
.alignto { border-left: 1px solid #474747; padding-left: 20px; }
.alignto button { height: 34px; padding-left: 6px; gap: 2px; }
.seps { flex: 1; display: flex; flex-direction: column; }
.seps .on { padding: 0 9px; }
.seps .tabs { height: 26px; }
.check { display: flex; align-items: center; gap: 5px; padding: 6px 6px 6px; font-size: 10px; font-weight: 600; line-height: 12px; color: #eee; }
.check input, .opt input { appearance: none; flex: none; width: 12px; height: 12px; border: 1px solid #c8c8c8; border-radius: 2px; }
.inks { margin: 0 5px; border-collapse: collapse; }
.inks td { height: 21px; padding: 0 4px; border: 1px solid #626262; color: #7b7b7b; font-weight: 600; }
.inks td:first-child { width: 22px; }
.inks svg { width: 13px; height: 9px; color: #8f8f8f; }
.ink { display: inline-block; width: 11px; height: 11px; margin-right: 4px; border: 1px solid #2e2e2e; vertical-align: -2px; }
.cmyk { border-color: #999; background: conic-gradient(from -45deg, #8f3d84 25%, #8c9247 0 50%, #222 0 75%, #4d8fb4 0); }
.cyan { background: #549bc9; }
.magenta { background: #e02c5a; }
.yellow { background: #e9e12c; }
.black { background: #000; }
.inkrest { flex: 1; margin: 0 5px; border: 1px solid #626262; border-top: 0; }
.spot { padding: 6px 6px 8px; color: #7b7b7b; font-weight: 400; }
.spot input { border-color: #747474; }

/* floating colour panel */
.colorpanel { position: absolute; right: 343px; top: 11px; width: 239px; background: #535353; border: 1px solid #383838; border-right: 0; }
.tabend { order: 2; display: flex; align-items: center; gap: 6px; padding-right: 6px; border-bottom: 1px solid #383838; }
.tabend i { width: 1px; height: 12px; background: #a0a0a0; }
.cbody { display: flex; gap: 13px; padding: 8px 9px 0 5px; height: 110px; }
.cswatch { width: 34px; }
.ctop { display: flex; justify-content: space-between; }
.cfs { position: relative; height: 30px; margin-top: 5px; }
.s-fill, .s-stroke { position: absolute; }
.s-fill { left: 0; top: 0; }
.s-stroke { left: 10px; top: 10px; }
.sliders { flex: 1; display: grid; grid-template-columns: 11px 109px 35px 10px; grid-auto-rows: 25px; column-gap: 4px; align-items: center; margin-top: -2px; align-content: start; }
.rg { appearance: none; width: 109px; height: 14px; background: none; }
.rg::-webkit-slider-runnable-track { height: 14px; background: var(--ramp) center 2px / calc(100% - 9px) 4px no-repeat; }
.rg::-webkit-slider-thumb { appearance: none; width: 9px; height: 8px; margin-top: 6px; background: #c4c4c4; clip-path: polygon(50% 0, 100% 45%, 100% 100%, 0 100%, 0 45%); }
.c { --ramp: linear-gradient(90deg, #dc3163, #8a3b8a, #283282); }
.m { --ramp: linear-gradient(90deg, #5c97c6, #1d62a5, #283282); }
.y { --ramp: linear-gradient(90deg, #283282, #2a2f66, #333); }
.k { --ramp: linear-gradient(90deg, #283282, #181c44, #000); }
.num { width: 35px; height: 21px; padding: 0 4px; border: 1px solid #626262; border-radius: 3px; background: #454545; color: #eee; font-size: 10px; }
.quick { display: flex; width: 40px; margin: 3px 0 10px 5px; border: 1px solid #222; }
.quick span { flex: 1; height: 12px; }
.qb { background: #000; }
.qw { background: #fff; }
.spectrum { height: 22px; margin: 0 17px 7px 6px; border: 1px solid #222; background: linear-gradient(rgba(255,255,255,.95), rgba(255,255,255,0) 45%, rgba(0,0,0,.1) 55%, #000 95%), linear-gradient(90deg, #e3131b, #e8362a 5%, #e9dd1f 17%, #6cb23f 28%, #1a9447 40%, #4aa0cf 52%, #26337f 68%, #943c86 84%, #e0285c 92%, #e3131b); }
.resize { height: 8px; border-top: 1px solid #383838; }
.resize .grip { margin-top: 1px; }

/* dialog */
.dlgframe { position: absolute; left: 715px; top: 292px; width: 490px; padding: 0 8px 7px 0; border: solid rgba(40,40,40,.75); border-width: 0 2px 2px 0; }
.dialog { background: #515151; box-shadow: 0 0 7px rgba(0,0,0,.45); font-family: "DejaVu Sans Condensed", "DejaVu Sans", sans-serif; font-size: 12px; color: #d2d2d2; }
.dtitle { height: 30px; padding-left: 9px; line-height: 30px; background: #fff; color: #8b9896; }
.dbody { padding: 9px 8px 22px 8px; }
.dialog fieldset { margin-bottom: 3px; padding: 0 4px 8px 5px; border: 1px solid #7d7d7d; }
.dialog .cells { padding-bottom: 14px; }
.dialog legend { padding: 0 2px; line-height: 15px; color: #f0f0f0; }
.drow { display: flex; align-items: center; }
.r20 { height: 21px; }
.r24 { height: 25px; }
.r28 { height: 27px; }
.opt { display: flex; align-items: center; gap: 4px; }
.opt input[type=radio] { border-radius: 50%; }
.opt input[type=radio]:checked { border: 4px solid #b4b4b4; }
.opt input[type=checkbox]:checked { border: 0; background: url("data:image/svg+xml,%3Csvg xmlns='http://www.w3.org/2000/svg' viewBox='0 0 12 12'%3E%3Cpath d='M3 6l2.500 2.500L10 3' fill='none' stroke='%23454545' stroke-width='2'/%3E%3C/svg%3E") #adadad; }
.col1 { width: 91px; }
.lab { width: 42px; }
.lab2 { width: 42px; margin-left: 12px; }
.fld { height: 21px; padding: 0 4px; border: 1px solid #767676; border-radius: 0; background: #979797; color: #0c0616; min-width: 0; }
.fld:disabled { background: #707070; border-color: #707070; color: #646464; }
.w134 { width: 134px; }
.grow { flex: 1; margin-left: 6px; }
.col2 { width: 129px; }
.fontsel { appearance: none; width: 180px; height: 22px; margin-left: 3px; padding: 0 4px; border: 1px solid #888; border-radius: 0; color: #0c0616; background: url("data:image/svg+xml,%3Csvg xmlns='http://www.w3.org/2000/svg' width='10' height='10'%3E%3Cpath d='M1 3 5 7 9 3' fill='none' stroke='%23333'/%3E%3C/svg%3E") right 3px center no-repeat #fff; }
.col3 { width: 89px; }
.dgrid { display: grid; grid-template-columns: 99px 99px 1fr 149px; align-items: center; margin-top: 4px; }
.dgrid label:nth-of-type(even) { padding-left: 14px; }
.dgrid .fld { height: 20px; }
.dbtns { display: flex; justify-content: flex-end; gap: 9px; padding: 21px 10px 0 0; }
.dbtns button { width: 81px; height: 20px; border: 1px solid #777; background: none; }
.dbtns .ok { border: 2px solid #757575; }
```
